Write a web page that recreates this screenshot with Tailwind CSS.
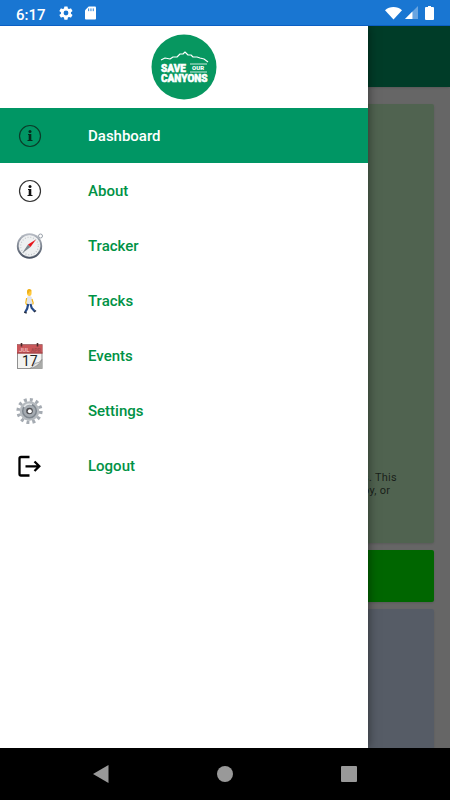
<!DOCTYPE html>
<html lang="en">
<head>
  <meta charset="UTF-8" />
  <meta name="viewport" content="width=device-width, initial-scale=1" />
  <title>Save Our Canyons</title>
  <script src="https://cdn.jsdelivr.net/npm/@tailwindcss/browser@4"></script>
</head>
<body class="h-screen flex flex-col overflow-hidden bg-black font-['Roboto',sans-serif]">

  <!-- Status bar -->
  <div class="h-[26px] shrink-0 bg-[#1976d2] text-white flex items-center px-4 border-b border-[#0b5fc4]">
    <span class="text-[15px] leading-6 font-medium pt-1">6:17</span>
    <svg class="size-4 ml-3" viewBox="0 0 24 24" fill="currentColor">
      <path d="M19.4 13a7.500 7.500 0 0 0 0-2l2.100-1.600a.5.5 0 0 0 .1-.6l-2-3.500a.5.5 0 0 0-.6-.2l-2.500 1a7.300 7.300 0 0 0-1.700-1l-.4-2.600a.5.5 0 0 0-.5-.4h-4a.5.5 0 0 0-.5.4L9 5.100a7.700 7.700 0 0 0-1.700 1l-2.500-1a.5.5 0 0 0-.6.2l-2 3.500a.5.5 0 0 0 .1.6L4.500 11a8 8 0 0 0 0 2l-2.200 1.600a.5.5 0 0 0-.1.600l2 3.500c.1.2.4.3.6.2l2.500-1a7.300 7.300 0 0 0 1.700 1l.4 2.600c0 .3.200.5.500.5h4c.3 0 .5-.2.500-.5l.4-2.600a7.300 7.300 0 0 0 1.700-1l2.500 1c.2.100.5 0 .6-.2l2-3.500a.5.5 0 0 0-.1-.6zM12 15.600a3.600 3.600 0 1 1 0-7.200 3.600 3.600 0 0 1 0 7.200z" />
    </svg>
    <svg class="w-[11px] h-4 ml-[11px]" viewBox="0 0 12 16">
      <path d="M4 1h7a1 1 0 0 1 1 1v12a1 1 0 0 1-1 1H1a1 1 0 0 1-1-1V5z" fill="#fff" />
      <path d="M4 3v3M6.500 3v3M9 3v3" stroke="#1976d2" />
    </svg>
    <div class="ml-auto flex items-center">
      <svg class="w-[17px] h-[14px]" viewBox="0 0 18 14"><path d="M0 4C5-.5 13-.5 18 4L9 14z" fill="#fff" /></svg>
      <svg class="size-[13px] ml-[3px]" viewBox="0 0 14 14">
        <path d="M14 0v14H0z" fill="#fff" fill-opacity=".35" />
        <path d="M8 6v8H0z" fill="#fff" />
      </svg>
      <svg class="w-[9px] h-[14px] ml-[7px]" viewBox="0 0 9 14"><path d="M3 0h3v1h2a1 1 0 0 1 1 1v11a1 1 0 0 1-1 1H1a1 1 0 0 1-1-1V2a1 1 0 0 1 1-1h2z" fill="#fff" /></svg>
    </div>
  </div>

  <main class="relative flex-1 overflow-hidden bg-white">
    <!-- Dashboard page -->
    <header class="h-[61px] bg-[#009664] shadow"></header>
    <div class="px-4 pt-[17px] flex flex-col gap-[7px]">
      <section class="h-[439px] rounded-xs bg-[#c8f7c8] shadow pt-[367px] pl-[347px] text-[11px] leading-[13px] tracking-wide text-black/70">
        <p>s. This<br>oy, or</p>
      </section>
      <section class="h-[52px] rounded-xs bg-[#00ff00] shadow"></section>
      <section class="h-[200px] rounded-xs bg-[#d7e6ff] shadow"></section>
    </div>

    <div class="absolute inset-0 bg-black/60"></div>

    <!-- Drawer -->
    <aside class="absolute inset-y-0 left-0 right-[82px] bg-white shadow-[0_0_10px_rgba(0,0,0,0.5)]">
      <div class="h-[82px] flex justify-center items-center">
        <svg class="size-[66px]" viewBox="0 0 66 66" role="img" aria-label="Save Our Canyons">
          <circle cx="33" cy="33" r="32.500" fill="#079760" />
          <path d="M10 26l4-2 5 1 3-2 4 0 3-3 3 0 2-2 3 3 3 0 2 2 4 0 3 1 4 1 4 3" fill="none" stroke="#fff" stroke-width="1.100" stroke-linejoin="round" />
          <g fill="#fff" font-family="Roboto, sans-serif" font-weight="900">
            <g font-size="10" stroke="#fff" stroke-width=".5" stroke-linejoin="miter">
              <text x="10" y="38">SAVE</text>
              <text x="10" y="48">CANYONS</text>
            </g>
            <text x="41" y="36" font-size="6">OUR</text>
          </g>
          <path d="M39 30h17M39 38h17" stroke="#fff" stroke-width=".8" />
        </svg>
      </div>

      <nav class="text-[15px] leading-5 font-medium text-[#009245]">
        <a href="#dashboard" class="h-[55px] flex items-center pl-4 gap-11 bg-[#009664] text-white">
          <svg class="size-7" viewBox="0 0 28 28">
            <circle cx="14" cy="14" r="10.500" fill="none" stroke="#0b3d2a" stroke-width="1.200" />
            <path d="M12 12h3.300v6h1.200v1h-5v-1h1.200v-5H12z" fill="#062b1d" /><circle cx="14" cy="9.500" r="1.500" fill="#062b1d" />
          </svg>
          Dashboard
        </a>
        <a href="#about" class="h-[55px] flex items-center pl-4 gap-11">
          <svg class="size-7" viewBox="0 0 28 28">
            <circle cx="14" cy="14" r="10.500" fill="none" stroke="#333" stroke-width="1.200" />
            <path d="M12 12h3.300v6h1.200v1h-5v-1h1.200v-5H12z" fill="#111" /><circle cx="14" cy="9.500" r="1.500" fill="#111" />
          </svg>
          About
        </a>
        <a href="#tracker" class="h-[55px] flex items-center pl-4 gap-11">
          <svg class="size-7" viewBox="0 0 28 28">
            <defs>
              <linearGradient id="rim" x1="0" y1="0" x2="0" y2="1"><stop offset="0" stop-color="#b9bec6" /><stop offset="1" stop-color="#454f5f" /></linearGradient>
            </defs>
            <circle cx="24.500" cy="4" r="2" fill="none" stroke="#9aa1aa" />
            <circle cx="13.500" cy="14" r="12.700" fill="url(#rim)" />
            <circle cx="13.500" cy="14" r="10.500" fill="#eef0f1" stroke="#fff" stroke-width=".6" />
            <circle cx="13.500" cy="14" r="8.800" fill="none" stroke="#c2c6ca" stroke-width="1.200" stroke-dasharray="1 1.800" />
            <path d="M6 21.500l6-9 2.500 2.500z" fill="#7c858c" />
            <path d="M20 7.500l-8 5 2.500 2.500z" fill="#e8151b" />
          </svg>
          Tracker
        </a>
        <a href="#tracks" class="h-[55px] flex items-center pl-4 gap-11">
          <svg class="size-7" viewBox="0 0 28 28">
            <path d="M11 10q2.500-2 4.800 0l.7 7.500h-5.500z" fill="#dfe4ee" />
            <path d="M10.600 11l-.8 5 1 2" fill="none" stroke="#f3b51b" stroke-width="1.200" />
            <path d="M16 12l1.200 4-.6 1.500" fill="none" stroke="#f3b51b" stroke-width="1.200" />
            <path d="M12.200 17l-1 4.500-1.900 3.500M14.500 17l1.200 4 2.800 3" fill="none" stroke="#254a88" stroke-width="2.200" />
            <path d="M8.200 25l2.500 1.200M18 25l2-1.500" stroke="#222c40" stroke-width="1.400" />
            <ellipse cx="13.300" cy="5.800" rx="2.300" ry="3.200" fill="#ffc83d" />
            <path d="M11 5q0-3.300 2.500-3 2.300.2 2.100 2.300l-2.400.2-.5 1.800-1.300.5z" fill="#eeb01a" />
          </svg>
          Tracks
        </a>
        <a href="#events" class="h-[55px] flex items-center pl-4 gap-11">
          <svg class="size-7" viewBox="0 0 28 28">
            <rect x="1.500" y="2.500" width="24.500" height="24" fill="#f3f3f1" stroke="#777" stroke-width=".8" />
            <path d="M1 2.500h25.500v9H1z" fill="#c9575a" />
            <path d="M1 11h25.500" stroke="#8a3436" stroke-width=".8" />
            <g font-family="Roboto, sans-serif">
              <text x="3" y="10" font-size="6" font-weight="700" fill="#efb7b7">JUL</text>
              <text x="15" y="10" font-size="5" font-weight="700" fill="#a5494b">APR</text>
              <text x="6" y="24" font-size="14" font-weight="400" fill="#222">17</text>
            </g>
            <path d="M26.300 17v9.800H14q3-2 5-5.500 4 .5 7.300-4.300z" fill="#a9aaa8" />
            <path d="M26 17.500q-3 4-7 3.800-2 3.500-5 5.200 8-1.500 12-9z" fill="#e6e6e3" stroke="#777" stroke-width=".5" />
            <path d="M5.500 1v3.500M21.500 1v3.500" stroke="#4c2a2a" stroke-width="1.600" />
          </svg>
          Events
        </a>
        <a href="#settings" class="h-[55px] flex items-center pl-4 gap-11">
          <svg class="size-7" viewBox="0 0 28 28">
            <circle cx="13.500" cy="14" r="11.300" fill="none" stroke="#a5abb2" stroke-width="3.600" stroke-dasharray="2.900 3.017" />
            <circle cx="13.500" cy="14" r="9.800" fill="#b4b9be" />
            <circle cx="13.500" cy="14" r="6.800" fill="#a5abb1" stroke="#7e868e" stroke-width="1.500" />
            <path d="M8 10a7 7 0 0 1 8-2.500" fill="none" stroke="#e4e7ea" stroke-width="1.500" />
            <circle cx="13.500" cy="14" r="3.300" fill="#4c4c50" />
            <circle cx="13.800" cy="14.300" r="2" fill="#fff" />
          </svg>
          Settings
        </a>
        <a href="#logout" class="h-[55px] flex items-center pl-4 gap-11">
          <svg class="size-7" viewBox="0 0 28 28" fill="none" stroke="#000" stroke-width="2.300">
            <path d="M13.500 5H5q-1.500 0-1.500 1.500v15.500q0 1.500 1.500 1.500h8.500" />
            <path d="M9.500 14.300h13.500M18.500 9.500l4.800 4.800L18.500 19" />
          </svg>
          Logout
        </a>
      </nav>
    </aside>
  </main>

  <!-- Navigation bar -->
  <div class="h-[52px] shrink-0 bg-black flex justify-center items-center gap-[108px] text-[#999]">
    <button aria-label="Back" class="w-4 h-[18px]"><svg viewBox="0 0 16 18" fill="currentColor"><path d="M15.500 0v18L0 9z" /></svg></button>
    <button aria-label="Home" class="size-4 rounded-full bg-[#999]"></button>
    <button aria-label="Recent apps" class="size-4 rounded-[1px] bg-[#999]"></button>
  </div>

</body>
</html>
